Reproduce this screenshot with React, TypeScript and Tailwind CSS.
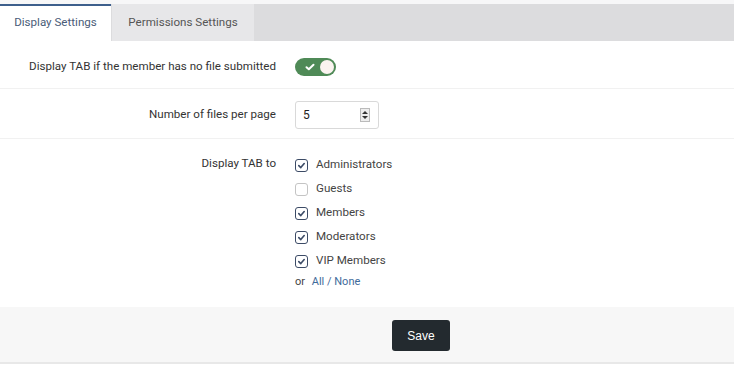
import React from "react";

function Check({ checked }: { checked: boolean }) {
  return (
    <span
      className={
        "flex h-[13px] w-[13px] items-center justify-center rounded-[3px] border " +
        (checked ? "border-[#3c4b66] bg-white" : "border-[#c4c4c4] bg-white")
      }
    >
      {checked && (
        <svg width="9" height="9" viewBox="0 0 10 10">
          <path d="M2 5.2 L4.2 7.3 L8 2.8" fill="none" stroke="#3c4b66" strokeWidth="1.8" strokeLinecap="round" strokeLinejoin="round" />
        </svg>
      )}
    </span>
  );
}

export default function App() {
  const groups: [string, boolean][] = [
    ["Administrators", true],
    ["Guests", false],
    ["Members", true],
    ["Moderators", true],
    ["VIP Members", true],
  ];
  return (
    <div className="w-[734px] h-[366px] bg-white text-[11.6px] text-[#333]" style={{ fontFamily: "Roboto, 'Liberation Sans', sans-serif" }}>
      <div className="h-[4px] bg-[#f7f7f8]" />
      <div className="flex h-[37px] bg-[#dcdcde]">
        <div className="flex w-[111px] items-center justify-center border-t-2 border-[#3d5f8c] bg-white pb-[2px] text-[#4a5c78]">
          Display Settings
        </div>
        <div className="ml-px flex w-[142px] items-center justify-center bg-[#e7e7e9] text-[#555]">
          Permissions Settings
        </div>
      </div>

      <div className="flex h-[48px] items-center border-b border-[#f1f1f1] pt-[5px]">
        <div className="w-[276px] text-right">Display TAB if the member has no file submitted</div>
        <div className="ml-[19px] flex h-[18px] w-[41px] items-center justify-between rounded-full bg-[#4f8a57] pl-[10px] pr-[2px]">
          <svg width="10" height="8" viewBox="0 0 10 8">
            <path d="M1.5 4.2 L3.8 6.3 L8.5 1.7" fill="none" stroke="white" strokeWidth="2" strokeLinecap="round" strokeLinejoin="round" />
          </svg>
          <span className="h-[14px] w-[14px] rounded-full bg-[#fbf3f0]" />
        </div>
      </div>

      <div className="flex h-[50px] items-center border-b border-[#f1f1f1] pt-[2px]">
        <div className="w-[276px] text-right">Number of files per page</div>
        <div className="ml-[19px] flex h-[28px] w-[84px] items-center justify-between rounded-[3px] border border-[#d9d9d9] bg-white pl-[7px] pr-[8px]">
          <span className="text-[12px] text-[#222]">5</span>
          <span className="flex h-[14px] w-[10px] flex-col items-center justify-center gap-[2px] border border-[#bbb] bg-[#eee]">
            <svg width="6" height="3" viewBox="0 0 6 3"><path d="M0 3 L3 0 L6 3Z" fill="#333" /></svg>
            <svg width="6" height="3" viewBox="0 0 6 3"><path d="M0 0 L3 3 L6 0Z" fill="#333" /></svg>
          </span>
        </div>
      </div>

      <div className="flex h-[168px] items-start pt-[16px]">
        <div className="w-[276px] text-right">Display TAB to</div>
        <div className="ml-[19px] -mt-[2px] flex flex-col">
          {groups.map(([name, c]) => (
            <div key={name} className="flex h-[24px] items-center gap-[8px]">
              <Check checked={c} />
              <span className="text-[#444]">{name}</span>
            </div>
          ))}
          <div className="mt-[1px] text-[11px] text-[#444]">
            or <span className="ml-[4px] text-[#3f6b9b]">All / None</span>
          </div>
        </div>
      </div>

      <div className="flex h-[57px] items-center border-b-2 border-[#e8e8e8] bg-[#f7f7f7] pl-[392px] pt-[2px]">
        <button
          className="h-[31px] w-[58px] rounded-[3px] bg-[#232a2f] text-[12px] text-white"
          style={{ fontFamily: "'Liberation Sans', Arial, sans-serif" }}
        >
          Save
        </button>
      </div>
    </div>
  );
}
